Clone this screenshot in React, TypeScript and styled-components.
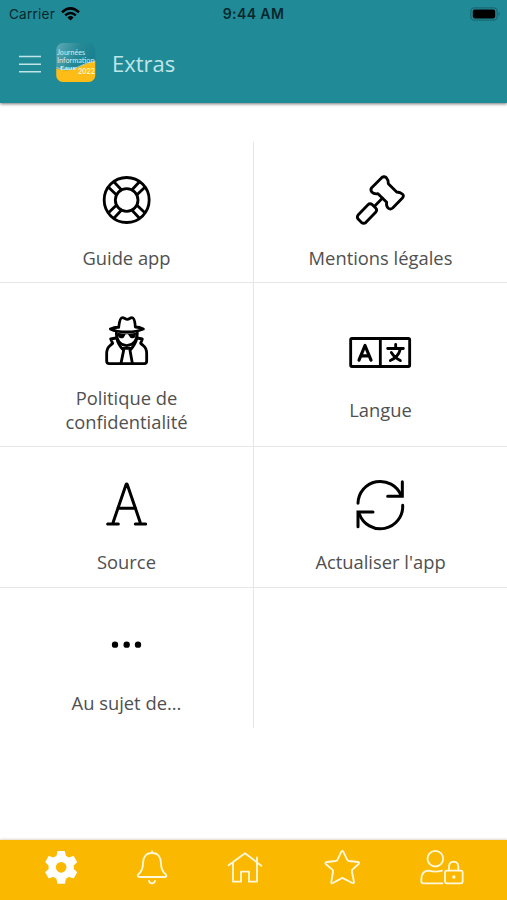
import React from "react";
import styled, { createGlobalStyle } from "styled-components";

const GlobalStyle = createGlobalStyle`
  * { box-sizing: border-box; }
  body { margin: 0; background: #fff; }
`;

const Screen = styled.div`
  display: flex;
  flex-direction: column;
  width: 507px;
  height: 900px;
  overflow: hidden;
  background: #fff;
  font-family: "Open Sans", sans-serif;
`;

const Header = styled.header`
  height: 103px;
  flex: none;
  background: #218a97;
  box-shadow: 0 1px 3px rgba(0, 0, 0, 0.55);
`;

const StatusBar = styled.div`
  display: grid;
  grid-template-columns: 1fr auto 1fr;
  align-items: center;
  height: 27px;
  padding: 0 6px 0 9px;
  font-family: Inter, sans-serif;
  font-size: 13.5px;
  color: #06282d;
`;

const Carrier = styled.div`
  display: flex;
  align-items: center;
  gap: 6px;
  letter-spacing: 0.25px;
`;

const Clock = styled.div`
  margin-right: 3px;
  font-weight: 600;
  font-size: 14px;
  letter-spacing: 0.4px;
`;

const Battery = styled.svg`
  justify-self: end;
`;

const TitleBar = styled.div`
  display: flex;
  align-items: center;
  height: 72px;
  padding: 0 0 0 19px;
`;

const MenuIcon = styled.svg`
  margin: 2px 15px 0 0;
`;

const Title = styled.h1`
  margin: 0 0 0 16px;
  font-size: 22px;
  font-weight: 400;
  line-height: 30px;
  color: #c0e5e8;
`;

const Main = styled.main`
  flex: 1;
  padding-top: 39px;
`;

const Grid = styled.div`
  display: grid;
  grid-template-columns: 254px 253px;
  grid-template-rows: 141px 164px 141px 140px;
`;

const Label = styled.div`
  margin-top: 15px;
  font-size: 18.35px;
  line-height: 23.5px;
  text-align: center;
  color: #505050;
`;

const Tile = styled.div<{ $right?: boolean; $first?: boolean; $last?: boolean }>`
  display: flex;
  flex-direction: column;
  align-items: center;
  justify-content: center;
  padding: 27px 30px ${(p) => (p.$first ? 12 : 13)}px;
  border-right: ${(p) => (p.$right ? "none" : "1px solid #e6e6e6")};
  border-bottom: ${(p) => (p.$last ? "none" : "1px solid #e6e6e6")};

  ${Label} {
    margin-top: ${(p) => (p.$first ? 15 : 14)}px;
  }
`;

const TileIcon = styled.svg`
  width: 66px;
  height: 62px;
  margin-right: 1px;
  flex: none;
  fill: none;
  stroke: #000;
  stroke-linecap: round;
  stroke-linejoin: round;
`;

const TabBar = styled.nav`
  display: flex;
  gap: 59px;
  height: 60px;
  flex: none;
  padding: 8px 0 0 45px;
  background: #fbb800;
  box-shadow: 0 -1px 2px rgba(150, 130, 90, 0.3);
`;

const TabIcon = styled.svg<{ $width: number }>`
  width: ${(p) => p.$width}px;
  height: 40px;
  flex: none;
  fill: none;
  stroke: #fff8dc;
  stroke-width: 5.5;
  stroke-linecap: round;
  stroke-linejoin: round;
`;

const LifeRing = () => (
  <TileIcon viewBox="129 26 198 186" strokeWidth="8.5">
    <circle cx="230" cy="119" r="67.5" />
    <circle cx="230" cy="119" r="34" />
    {[0, 90, 180, 270].map((a) => (
      <path key={a} transform={`rotate(${a} 230 119)`} d="M246 88 267 66M261 103 283 82" />
    ))}
  </TileIcon>
);

const Gavel = () => (
  <TileIcon viewBox="141 26 198 186" strokeWidth="8.5">
    <path d="M215 82 245 52Q252 46 259 52Q265 58 265 70L290 95Q301 96 307 101Q313 106 308 112L278 143Q271 149 264 143Q258 137 260 126L234 100Q222 102 216 96Q210 89 215 82Z" />
    <path d="M247 114 225 136" />
    <path d="M204 133Q210 127 217 133L227 143Q233 149 227 156L198 186Q191 192 184 186L175 177Q169 170 175 163Z" />
  </TileIcon>
);

const Spy = () => (
  <TileIcon viewBox="129 15 198 186" strokeWidth="8.5">
    <path d="M181 72Q195 66 206 67C208 50 211 38 217 38C223 38 226 43 232 43C238 43 240 38 246 38C252 38 255 50 256 66Q268 66 280 72Q260 81 231 81Q199 81 181 72Z" />
    <path d="M199 84C200 106 211 121 230 122C250 121 261 106 262 84" />
    <path d="M202 83Q230 89 259 83L256 95Q251 103 241 98L234 88H227L221 98Q211 103 205 95Z" fill="#000" stroke="none" />
    <path d="M198 99 182 102 188 115 180 122Q170 129 170 147V168Q170 176 178 176H283Q290 176 290 168V147Q290 129 280 122L272 115 277 102 262 99" />
    <path d="M200 98Q204 119 221 136L213 175M261 98Q256 119 240 136L247 175" />
    <path d="M217 130H244" />
  </TileIcon>
);

const Language = () => (
  <TileIcon viewBox="141 4.5 198 186" strokeWidth="8.5">
    <rect x="152" y="54" width="177" height="84" rx="4" />
    <path d="M241 54V138" />
    <path d="M177 119 195 75 213 119M184 106H206" strokeWidth="9.5" />
    <path d="M287 72V83M263 84H310M301 86Q295 110 271 120M274 96Q283 111 301 120" strokeWidth="8.5" />
  </TileIcon>
);

const LetterA = () => (
  <TileIcon viewBox="129 27 198 186" strokeWidth="9">
    <path d="M188 176 228 59Q230 55 232 59L272 176M203 130H257M173 177H205M256 177H287" />
  </TileIcon>
);

const Refresh = () => (
  <TileIcon viewBox="141 27 198 186" strokeWidth="9">
    <path d="M174 115A67 67 0 0 1 303 91M308 121A67 67 0 0 1 178 147" />
    <path d="M307 50V94H263M174 185V141H219" strokeLinejoin="miter" />
  </TileIcon>
);

const Dots = () => (
  <TileIcon viewBox="129 -15 198 186">
    {[195, 230, 264].map((x) => (
      <circle key={x} cx={x} cy="74" r="9.5" fill="#000" stroke="none" />
    ))}
  </TileIcon>
);

const AppLogo = () => (
  <svg width="40" height="40" viewBox="0 0 40 40">
    <defs>
      <linearGradient id="sky" x1="0" y1="0" x2="1" y2="0.4">
        <stop offset="0" stopColor="#5eaab6" />
        <stop offset="0.55" stopColor="#268895" />
        <stop offset="1" stopColor="#178091" />
      </linearGradient>
      <clipPath id="tile">
        <rect x="0.3" y="0" width="39" height="39" rx="6.5" />
      </clipPath>
    </defs>
    <g clipPath="url(#tile)">
      <rect width="40" height="40" fill="url(#sky)" />
      <path d="M0 25.500Q12 29.500 22 24.500Q31 19.500 40 18.500V40H0Z" fill="#fdbd16" />
      <path d="M0 24.500Q12 28.500 22 24Q31 19 40 18" fill="none" stroke="#b9d8c4" strokeWidth="0.9" />
      <g fill="#d5eef0" fontFamily="Lato, sans-serif" fontSize="6.6">
        <text x="1" y="11.8" textLength="28" lengthAdjust="spacingAndGlyphs">Journées</text>
        <text x="1" y="19.9" textLength="37.5" lengthAdjust="spacingAndGlyphs">Information</text>
        <text x="4" y="27" fontSize="5" fontWeight="700" textLength="16" lengthAdjust="spacingAndGlyphs">Eaux</text>
        <text x="22" y="30.5" fill="#fff3cb" fontSize="7" fontWeight="700" textLength="17" lengthAdjust="spacingAndGlyphs">2022</text>
      </g>
    </g>
  </svg>
);

const tiles = [
  { label: "Guide app", icon: <LifeRing /> },
  { label: "Mentions légales", icon: <Gavel /> },
  { label: "Politique de confidentialité", icon: <Spy /> },
  { label: "Langue", icon: <Language /> },
  { label: "Source", icon: <LetterA /> },
  { label: "Actualiser l'app", icon: <Refresh /> },
  { label: "Au sujet de...", icon: <Dots /> },
];

export default function App() {
  return (
    <>
      <GlobalStyle />
      <Screen>
        <Header>
          <StatusBar>
            <Carrier>
              Carrier
              <svg width="19" height="14" viewBox="0 0 19 14" fill="none" stroke="#000" strokeWidth="2.5">
                <path d="M1 5.2Q9.5-2.5 18 5.2M4.2 8.4Q9.5 3.7 14.8 8.4" />
                <path d="M9.5 13.5 6.4 10.4Q9.5 7.8 12.6 10.4Z" fill="#000" stroke="none" />
              </svg>
            </Carrier>
            <Clock>9:44 AM</Clock>
            <Battery width="31" height="14" viewBox="0 0 31 14">
              <rect x="0.8" y="0.8" width="26.4" height="12.4" rx="3.6" fill="none" stroke="#1a6873" strokeWidth="1.3" />
              <rect x="2.8" y="2.6" width="22.4" height="8.8" rx="1.8" />
              <path d="M28.6 4.8Q31 7 28.6 9.2Z" fill="#1a6873" />
            </Battery>
          </StatusBar>
          <TitleBar>
            <MenuIcon width="22" height="18" viewBox="0 0 22 18" stroke="#c0e5e8" strokeWidth="1.6">
              <path d="M0 1.5H22M0 9.2H22M0 16.8H22" />
            </MenuIcon>
            <AppLogo />
            <Title>Extras</Title>
          </TitleBar>
        </Header>
        <Main>
          <Grid>
            {tiles.map((t, i) => (
              <Tile key={t.label} $right={i % 2 === 1} $first={i < 2} $last={i > 5}>
                {t.icon}
                <Label>{t.label}</Label>
              </Tile>
            ))}
          </Grid>
        </Main>
        <TabBar>
          <TabIcon $width={32} viewBox="135 54 96 120">
            <path
              fill="#fff"
              fillRule="evenodd"
              stroke="#fff"
              strokeWidth="4"
              d="M174 65H193L196 79Q202 81 206 85L220 80 229 96 219 106Q220 112 219 118L229 127 220 143 206 138Q202 142 196 145L193 159H174L171 145Q165 142 161 138L147 143 138 127 148 118Q147 112 148 106L138 96 147 80 161 85Q165 81 171 79ZM183.500 94A18 18 0 1 0 183.500 130A18 18 0 1 0 183.500 94Z"
            />
          </TabIcon>
          <TabIcon $width={32} viewBox="408 54 96 120">
            <path d="M456 64V69M456 69C437 69 429 83 429 100C429 119 424 126 415 133C411 138 414 141 419 141H493C499 141 501 138 497 133C488 126 483 119 483 100C483 83 475 69 456 69ZM447 153Q449 160 456 160Q463 160 465 153" />
          </TabIcon>
          <TabIcon $width={36} viewBox="681 54 108 120">
            <path d="M686 106 735 70 784 107M699 99V155H723V125H747V155H771V98M771 96V82" />
          </TabIcon>
          <TabIcon $width={39} viewBox="186 54 117 120">
            <path d="M244 65Q247 60 250 65L261 88Q262 92 267 93L294 96Q300 97 296 102L277 119Q275 122 276 126L282 156Q282 161 277 159L250 145Q247 143 244 145L219 159Q213 162 214 155L219 126Q220 122 217 119L197 102Q194 98 200 96L227 93Q231 92 233 88Z" />
          </TabIcon>
          <TabIcon $width={46} viewBox="480 54 138 120">
            <circle cx="526" cy="86" r="23.500" />
            <path d="M547 160H490Q484 160 484 154V148Q484 122 507 122Q526 128 546 122" />
            <rect x="555" y="122" width="53" height="38" rx="6" />
            <path d="M567 121V109Q568 96 581 95Q594 96 595 109V121" />
            <circle cx="581.500" cy="141" r="5" fill="#fff8dc" stroke="none" />
          </TabIcon>
        </TabBar>
      </Screen>
    </>
  );
}
